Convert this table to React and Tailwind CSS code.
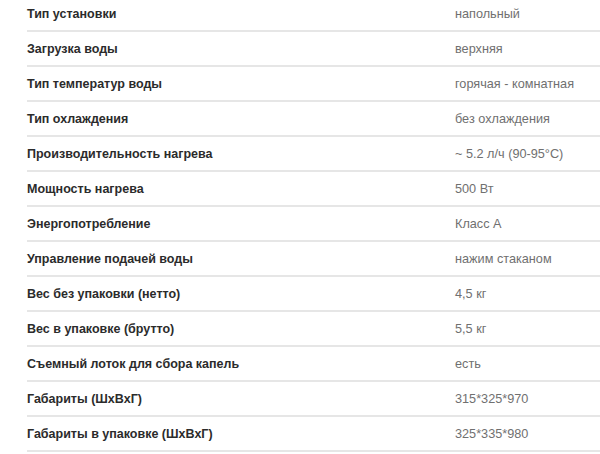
import React from 'react';

const specs = [
  ['Тип установки', 'напольный'],
  ['Загрузка воды', 'верхняя'],
  ['Тип температур воды', 'горячая - комнатная'],
  ['Тип охлаждения', 'без охлаждения'],
  ['Производительность нагрева', '~ 5.2 л/ч (90-95°C)'],
  ['Мощность нагрева', '500 Вт'],
  ['Энергопотребление', 'Класс А'],
  ['Управление подачей воды', 'нажим стаканом'],
  ['Вес без упаковки (нетто)', '4,5 кг'],
  ['Вес в упаковке (брутто)', '5,5 кг'],
  ['Съемный лоток для сбора капель', 'есть'],
  ['Габариты (ШхВхГ)', '315*325*970'],
  ['Габариты в упаковке (ШхВхГ)', '325*335*980'],
];

const App = () => {
  return (
    <div className="h-[454px] w-[600px] overflow-hidden bg-white pl-[27px] font-['Liberation_Sans',Arial,sans-serif]">
      <div className="-mt-[3px]">
        {specs.map(([label, value]) => (
          <div key={label} className="flex h-[35px] items-center border-b-2 border-[#e6e6e6] pt-[2px]">
            <div className="w-[428px] text-[12.5px] font-bold text-[#2b2b2b]">{label}</div>
            <div className="text-[12.7px] text-[#707070]">{value}</div>
          </div>
        ))}
      </div>
    </div>
  );
};

export default App;
